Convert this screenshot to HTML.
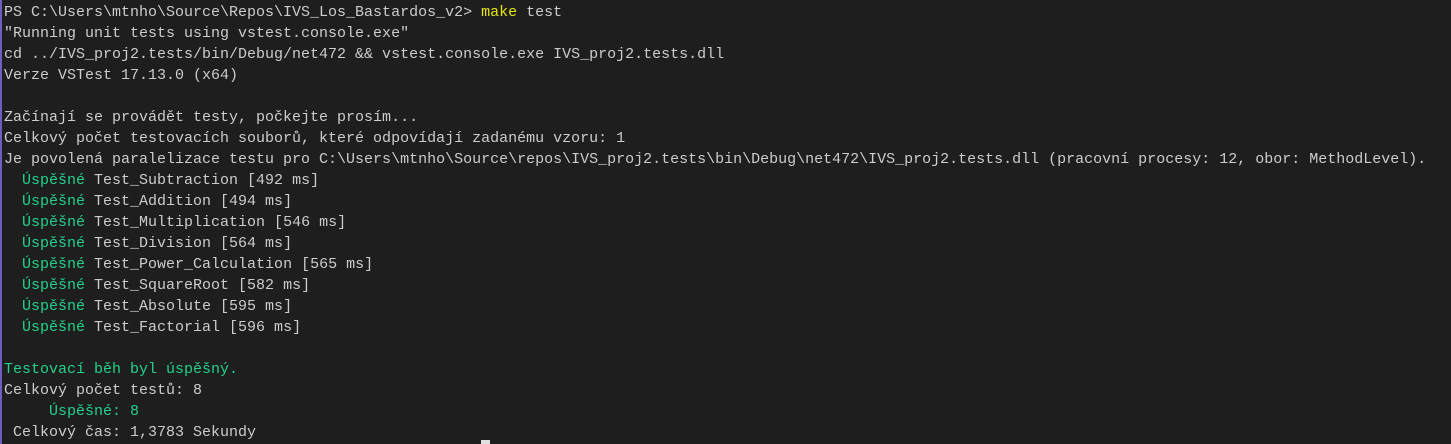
<!DOCTYPE html>
<html><head><meta charset="utf-8"><style>
html,body{margin:0;padding:0;background:#1e1e1e;width:1451px;height:444px;overflow:hidden}
body{border-left:2px solid #6b5fc4;box-sizing:border-box;position:relative}
pre{margin:0;padding:2px 0 0 2px;font-family:"Liberation Mono",monospace;font-size:15px;line-height:21px;color:#cccccc;white-space:pre}
.g{color:#23d18b}.y{color:#e5e510}
.cur{position:absolute;left:479px;top:440px;width:9px;height:4px;background:#e0e0e0}
</style></head><body><pre>PS C:\Users\mtnho\Source\Repos\IVS_Los_Bastardos_v2&gt; <span class="y">make</span> test
"Running unit tests using vstest.console.exe"
cd ../IVS_proj2.tests/bin/Debug/net472 &amp;&amp; vstest.console.exe IVS_proj2.tests.dll
Verze VSTest 17.13.0 (x64)

Začínají se provádět testy, počkejte prosím...
Celkový počet testovacích souborů, které odpovídají zadanému vzoru: 1
Je povolená paralelizace testu pro C:\Users\mtnho\Source\repos\IVS_proj2.tests\bin\Debug\net472\IVS_proj2.tests.dll (pracovní procesy: 12, obor: MethodLevel).
  <span class="g">Úspěšné</span> Test_Subtraction [492 ms]
  <span class="g">Úspěšné</span> Test_Addition [494 ms]
  <span class="g">Úspěšné</span> Test_Multiplication [546 ms]
  <span class="g">Úspěšné</span> Test_Division [564 ms]
  <span class="g">Úspěšné</span> Test_Power_Calculation [565 ms]
  <span class="g">Úspěšné</span> Test_SquareRoot [582 ms]
  <span class="g">Úspěšné</span> Test_Absolute [595 ms]
  <span class="g">Úspěšné</span> Test_Factorial [596 ms]

<span class="g">Testovací běh byl úspěšný.</span>
Celkový počet testů: 8
     <span class="g">Úspěšné: 8</span>
 Celkový čas: 1,3783 Sekundy</pre><div class="cur"></div></body></html>
